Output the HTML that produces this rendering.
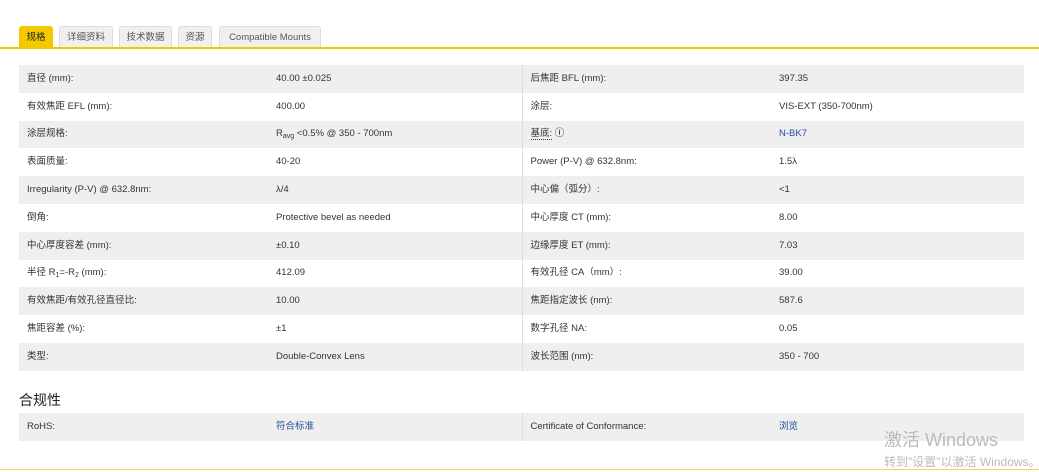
<!DOCTYPE html><html><head><meta charset="utf-8"><style>
body{margin:0;width:1039px;height:472px;background:#fff;font-family:"Liberation Sans","Noto Sans CJK SC",sans-serif;color:#333;position:relative;overflow:hidden;font-size:9.5px}
.tab{position:absolute;top:26px;height:22px;line-height:22px;background:#f0f0f0;border:1px solid #ddd;border-bottom:none;border-radius:3px 3px 0 0;font-size:9.5px;color:#555;text-align:center;box-sizing:border-box}
.tab.on{background:#f5c900;color:#222;border-color:#f5c900}
.line{position:absolute;left:0;width:1039px;height:2px;background:#f5c900}
table{position:absolute;left:19px;width:1005px;border-collapse:collapse;table-layout:fixed}
td{height:27.8px;padding:0 0 0 8px;box-sizing:border-box;vertical-align:middle;white-space:nowrap;line-height:14px}
td span.t{display:inline-block;vertical-align:middle;line-height:14px}
tr:nth-child(odd) td{background:#efefef}
td.c3{border-left:1px solid #ddd}
a{color:#1f4e9c;text-decoration:none}
sub{font-size:7px;line-height:0;vertical-align:-2px}
</style></head><body>
<div class="tab on" style="left:19px;width:34px">规格</div>
<div class="tab" style="left:59px;width:54px">详细资料</div>
<div class="tab" style="left:119px;width:53px">技术数据</div>
<div class="tab" style="left:178px;width:34px">资源</div>
<div class="tab" style="left:219px;width:102px">Compatible Mounts</div>
<div class="line" style="top:47px"></div>
<table style="top:65px">
<colgroup><col style="width:249px"><col style="width:254px"><col style="width:249px"><col></colgroup>
<tr><td>直径 (mm):</td><td>40.00 ±0.025</td><td class="c3">后焦距 BFL (mm):</td><td>397.35</td></tr>
<tr><td>有效焦距 EFL (mm):</td><td>400.00</td><td class="c3">涂层:</td><td>VIS-EXT (350-700nm)</td></tr>
<tr><td>涂层规格:</td><td>R<sub>avg</sub> &lt;0.5% @ 350 - 700nm</td><td class="c3"><span style="border-bottom:1px dotted #333">基底:</span> <b>ⓘ</b></td><td><a>N-BK7</a></td></tr>
<tr><td>表面质量:</td><td>40-20</td><td class="c3">Power (P-V) @ 632.8nm:</td><td>1.5λ</td></tr>
<tr><td>Irregularity (P-V) @ 632.8nm:</td><td>λ/4</td><td class="c3">中心偏（弧分）:</td><td>&lt;1</td></tr>
<tr><td>倒角:</td><td>Protective bevel as needed</td><td class="c3">中心厚度 CT (mm):</td><td>8.00</td></tr>
<tr><td>中心厚度容差 (mm):</td><td>±0.10</td><td class="c3">边缘厚度 ET (mm):</td><td>7.03</td></tr>
<tr><td>半径 R<sub>1</sub>=-R<sub>2</sub> (mm):</td><td>412.09</td><td class="c3">有效孔径 CA（mm）:</td><td>39.00</td></tr>
<tr><td>有效焦距/有效孔径直径比:</td><td>10.00</td><td class="c3">焦距指定波长 (nm):</td><td>587.6</td></tr>
<tr><td>焦距容差 (%):</td><td>±1</td><td class="c3">数字孔径 NA:</td><td>0.05</td></tr>
<tr><td>类型:</td><td>Double-Convex Lens</td><td class="c3">波长范围 (nm):</td><td>350 - 700</td></tr>
</table>
<div style="position:absolute;left:19px;top:390px;font-size:14px;color:#222">合规性</div>
<table style="top:413px">
<colgroup><col style="width:249px"><col style="width:254px"><col style="width:249px"><col></colgroup>
<tr><td>RoHS:</td><td><a>符合标准</a></td><td class="c3">Certificate of Conformance:</td><td><a>浏览</a></td></tr>
</table>
<div style="position:absolute;left:884px;top:426px;font-size:18px;color:#bbb">激活 Windows</div>
<div style="position:absolute;left:884px;top:453px;font-size:12px;color:#bbb;white-space:nowrap">转到"设置"以激活 Windows。</div>
<div style="position:absolute;left:0;top:469px;width:1039px;height:1px;background:#f5d84a"></div>
</body></html>
